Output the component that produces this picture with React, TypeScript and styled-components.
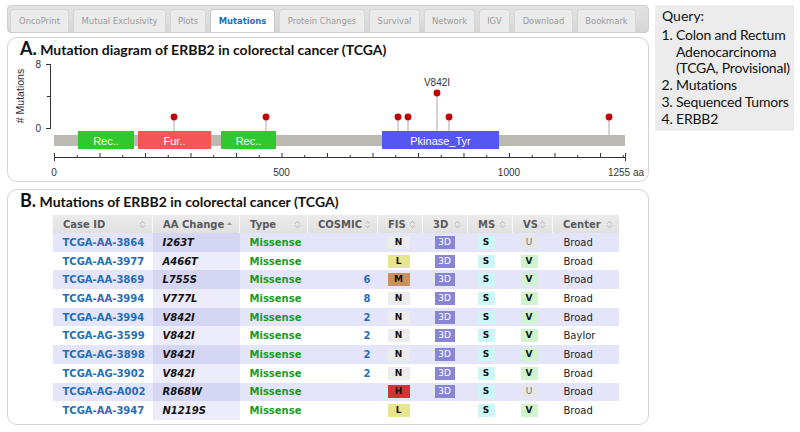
import React from "react";
import styled, { createGlobalStyle } from "styled-components";

const Global = createGlobalStyle`
  html, body { margin: 0; padding: 0; background: #fff; }
  body { width: 800px; height: 432px; overflow: hidden; }
`;

const Page = styled.div`
  display: flex;
  align-items: flex-start;
  gap: 6px;
  padding: 5px 0 0 7px;
`;

const Main = styled.div`
  width: 642px;
  display: flex;
  flex-direction: column;
`;

const TabBar = styled.div`
  height: 28px;
  box-sizing: border-box;
  border: 1px solid #cfcfcf;
  border-radius: 4px;
  background: linear-gradient(#e2e2e2, #d6d6d6);
  display: flex;
  align-items: flex-end;
  gap: 4px;
  padding-left: 2px;
`;

const Tab = styled.div<{ $w: number; $active?: boolean }>`
  width: ${(p) => p.$w}px;
  height: 23px;
  box-sizing: border-box;
  border: 1px solid ${(p) => (p.$active ? "#c8c8c8" : "#d6d6d6")};
  border-bottom: none;
  border-radius: 4px 4px 0 0;
  background: ${(p) => (p.$active ? "#fff" : "#ebebeb")};
  color: ${(p) => (p.$active ? "#1f6fb8" : "#9a9a9a")};
  font: ${(p) => (p.$active ? "bold" : "normal")} 8.4px "DejaVu Sans", Verdana, sans-serif;
  display: flex;
  align-items: center;
  justify-content: center;
  white-space: nowrap;
`;

const Panel = styled.div<{ $h: number; $mt: number }>`
  margin-top: ${(p) => p.$mt}px;
  height: ${(p) => p.$h}px;
  box-sizing: border-box;
  border: 1px solid #d4d4d4;
  border-radius: 10px;
  display: flex;
  flex-direction: column;
`;

const Title = styled.div`
  font: bold 14px Lato, "Open Sans", sans-serif;
  color: #111;
  height: 20px;
  line-height: 20px;
  padding-left: 12px;
  white-space: nowrap;
`;

const Big = styled.span`
  font-size: 18px;
`;

const Query = styled.div`
  width: 139px;
  height: 126px;
  box-sizing: border-box;
  background: #ececec;
  padding: 3px 0 0 7px;
  font: 14px Lato, "Open Sans", sans-serif;
  color: #111;
  line-height: 16.8px;
`;

const QList = styled.ol`
  margin: 2px 0 0 0;
  padding-left: 14px;
  letter-spacing: -0.2px;
`;

const Table = styled.table`
  margin: 5px 0 0 44px;
  border-collapse: collapse;
  table-layout: fixed;
  width: 566px;
  font: 10px "DejaVu Sans", Verdana, sans-serif;
`;

const Th = styled.th<{ $w: number }>`
  width: ${(p) => p.$w}px;
  height: 18px;
  padding: 0 0 0 10px;
  box-sizing: border-box;
  text-align: left;
  font-weight: bold;
  color: #5a5a5a;
  background: linear-gradient(#ebebeb, #e0e0e0);
  border-left: 1px solid #f8f8f8;
  white-space: nowrap;
`;

const ThInner = styled.div`
  display: flex;
  align-items: center;
  justify-content: space-between;
  padding-right: 6px;
`;

const Tr = styled.tr<{ $odd: boolean }>`
  height: 18.7px;
  background: ${(p) => (p.$odd ? "#e4e4fa" : "#fff")};
`;

const Td = styled.td<{ $align?: string; $pl?: number; $pr?: number }>`
  padding: 0 ${(p) => p.$pr ?? 0}px 0 ${(p) => p.$pl ?? 10}px;
  text-align: ${(p) => p.$align ?? "left"};
  white-space: nowrap;
  color: #222;
`;

const AaTd = styled(Td)<{ $odd: boolean }>`
  background: ${(p) => (p.$odd ? "#d5d5f4" : "#ececfb")};
  font-weight: bold;
  font-style: italic;
  color: #111;
`;

const CaseLink = styled.span`
  color: #1f6fb8;
  font-weight: bold;
`;

const Missense = styled.span`
  color: #1c9a1c;
  font-weight: bold;
`;

const Cosmic = styled.span`
  color: #1f6fb8;
  font-weight: bold;
`;

const Badge = styled.span<{ $w: number; $bg: string; $fg?: string; $bold?: boolean }>`
  display: inline-block;
  width: ${(p) => p.$w}px;
  height: 13px;
  line-height: 13px;
  text-align: center;
  vertical-align: middle;
  background: ${(p) => p.$bg};
  color: ${(p) => p.$fg ?? "#111"};
  font-size: 9px;
  font-weight: ${(p) => (p.$bold === false ? "normal" : "bold")};
`;

const SortIcon = ({ active }: { active?: boolean }) =>
  active ? (
    <svg width="7" height="8" viewBox="0 0 7 8">
      <path d="M1 5 L3.5 2 L6 5 Z" fill="#9a9a9a" />
    </svg>
  ) : (
    <svg width="7" height="9" viewBox="0 0 7 9">
      <path d="M1.2 3.6 L3.5 1.3 L5.8 3.6 M1.2 5.4 L3.5 7.7 L5.8 5.4" fill="none" stroke="#aaa" strokeWidth="0.9" />
    </svg>
  );

const tabs: [string, number][] = [
  ["OncoPrint", 59],
  ["Mutual Exclusivity", 93],
  ["Plots", 36],
  ["Mutations", 65],
  ["Protein Changes", 86],
  ["Survival", 51],
  ["Network", 51],
  ["IGV", 31],
  ["Download", 59],
  ["Bookmark", 59],
];

type Row = {
  id: string;
  aa: string;
  cosmic: string;
  fis: "N" | "L" | "M" | "H";
  d3: boolean;
  vs: "V" | "U";
  center: string;
};

const rows: Row[] = [
  { id: "TCGA-AA-3864", aa: "I263T", cosmic: "", fis: "N", d3: true, vs: "U", center: "Broad" },
  { id: "TCGA-AA-3977", aa: "A466T", cosmic: "", fis: "L", d3: true, vs: "V", center: "Broad" },
  { id: "TCGA-AA-3869", aa: "L755S", cosmic: "6", fis: "M", d3: true, vs: "V", center: "Broad" },
  { id: "TCGA-AA-3994", aa: "V777L", cosmic: "8", fis: "N", d3: true, vs: "V", center: "Broad" },
  { id: "TCGA-AA-3994", aa: "V842I", cosmic: "2", fis: "N", d3: true, vs: "V", center: "Broad" },
  { id: "TCGA-AG-3599", aa: "V842I", cosmic: "2", fis: "N", d3: true, vs: "V", center: "Baylor" },
  { id: "TCGA-AG-3898", aa: "V842I", cosmic: "2", fis: "N", d3: true, vs: "V", center: "Broad" },
  { id: "TCGA-AG-3902", aa: "V842I", cosmic: "2", fis: "N", d3: true, vs: "V", center: "Broad" },
  { id: "TCGA-AG-A002", aa: "R868W", cosmic: "", fis: "H", d3: true, vs: "U", center: "Broad" },
  { id: "TCGA-AA-3947", aa: "N1219S", cosmic: "", fis: "L", d3: false, vs: "V", center: "Broad" },
];

const fisBg: Record<string, string> = { N: "#ececec", L: "#e8e68c", M: "#c98f5c", H: "#d23434" };

const cols: [string, number, boolean?][] = [
  ["Case ID", 100],
  ["AA Change", 87, true],
  ["Type", 68],
  ["COSMIC", 70],
  ["FIS", 45],
  ["3D", 45],
  ["MS", 45],
  ["VS", 40],
  ["Center", 66],
];

const x0 = 54;
const scale = (625 - 54) / 1255;
const ax = (aa: number) => x0 + aa * scale;

const Diagram = () => {
  const ticks: number[] = [];
  for (let a = 0; a <= 1250; a += 50) ticks.push(a);
  const lolli: [number, number][] = [
    [174, 117],
    [266, 117],
    [398, 117],
    [408, 117],
    [437, 93],
    [449, 117],
    [609, 117],
  ];
  const domains: [number, number, string, string][] = [
    [78, 134, "#2fc82f", "Rec.."],
    [138, 211, "#f25656", "Fur.."],
    [221, 276, "#2fc82f", "Rec.."],
    [382, 499, "#5656f2", "Pkinase_Tyr"],
  ];
  return (
    <svg width="640" height="122" viewBox="8 58 640 122" style={{ display: "block" }}>
      <g fontFamily="'Liberation Sans', Arial, sans-serif" fontSize="10" fill="#333">
        <line x1="50.5" y1="64" x2="50.5" y2="129" stroke="#333" strokeWidth="1" />
        <line x1="46" y1="64.5" x2="50" y2="64.5" stroke="#333" />
        <line x1="47" y1="96.5" x2="50" y2="96.5" stroke="#333" />
        <line x1="46" y1="128.5" x2="50" y2="128.5" stroke="#333" />
        <text x="41" y="68" textAnchor="end">8</text>
        <text x="41" y="132" textAnchor="end">0</text>
        <text x="24" y="96" textAnchor="middle" fontSize="10.5" transform="rotate(-90 24 96)">
          # Mutations
        </text>
        {lolli.map(([x, y], i) => (
          <line key={"s" + i} x1={x} y1={y} x2={x} y2={136} stroke="#aaa" strokeWidth="1" />
        ))}
        <rect x="54" y="135" width="571" height="11" fill="#babab2" />
        {domains.map(([a, b, c, t], i) => (
          <g key={"d" + i}>
            <rect x={a} y={131} width={b - a} height={18} fill={c} />
            <text x={(a + b) / 2} y={144.5} textAnchor="middle" fill="#fff" fontSize="11">
              {t}
            </text>
          </g>
        ))}
        {lolli.map(([x, y], i) => (
          <circle key={"c" + i} cx={x} cy={y} r="3.4" fill="#c40000" />
        ))}
        <text x="437" y="86" textAnchor="middle" fontSize="10">V842I</text>
        <line x1="54" y1="157.5" x2="625" y2="157.5" stroke="#333" />
        {ticks.map((a) => (
          <line
            key={"t" + a}
            x1={ax(a) + 0.5}
            x2={ax(a) + 0.5}
            y1={a % 100 === 0 ? 153 : 155}
            y2={157.5}
            stroke="#333"
          />
        ))}
        <line x1="54.5" x2="54.5" y1="153" y2="161" stroke="#333" />
        <line x1="625.5" x2="625.5" y1="153" y2="161" stroke="#333" />
        <text x="54" y="176" textAnchor="middle">0</text>
        <text x={ax(500)} y="176" textAnchor="middle">500</text>
        <text x={ax(1000)} y="176" textAnchor="middle">1000</text>
        <text x="626" y="176" textAnchor="middle">1255 aa</text>
      </g>
    </svg>
  );
};

export default function App() {
  return (
    <>
      <Global />
      <Page>
        <Main>
          <TabBar>
            {tabs.map(([t, w]) => (
              <Tab key={t} $w={w} $active={t === "Mutations"}>
                {t}
              </Tab>
            ))}
          </TabBar>
          <Panel $mt={4} $h={145}>
            <Title>
              <Big>A.</Big> Mutation diagram of ERBB2 in colorectal cancer (TCGA)
            </Title>
            <Diagram />
          </Panel>
          <Panel $mt={7} $h={236}>
            <Title>
              <Big>B.</Big> Mutations of ERBB2 in colorectal cancer (TCGA)
            </Title>
            <Table>
              <thead>
                <tr>
                  {cols.map(([c, w, act]) => (
                    <Th key={c} $w={w}>
                      <ThInner>
                        <span>{c}</span>
                        <SortIcon active={act} />
                      </ThInner>
                    </Th>
                  ))}
                </tr>
              </thead>
              <tbody>
                {rows.map((r, i) => {
                  const odd = i % 2 === 0;
                  return (
                    <Tr key={i} $odd={odd}>
                      <Td>
                        <CaseLink>{r.id}</CaseLink>
                      </Td>
                      <AaTd $odd={odd}>{r.aa}</AaTd>
                      <Td>
                        <Missense>Missense</Missense>
                      </Td>
                      <Td $align="right" $pr={7}>
                        <Cosmic>{r.cosmic}</Cosmic>
                      </Td>
                      <Td $pl={10}>
                        <Badge $w={22} $bg={fisBg[r.fis]}>
                          {r.fis}
                        </Badge>
                      </Td>
                      <Td $pl={12}>
                        {r.d3 && (
                          <Badge $w={20} $bg="#8886d4" $fg="#fff" $bold={false}>
                            3D
                          </Badge>
                        )}
                      </Td>
                      <Td $pl={10}>
                        <Badge $w={17} $bg="#cdf6f6">
                          S
                        </Badge>
                      </Td>
                      <Td $pl={8}>
                        {r.vs === "V" ? (
                          <Badge $w={17} $bg="#cef5ce">
                            V
                          </Badge>
                        ) : (
                          <Badge $w={17} $bg="#e6e6e6" $fg="#777" $bold={false}>
                            U
                          </Badge>
                        )}
                      </Td>
                      <Td $pl={11}>{r.center}</Td>
                    </Tr>
                  );
                })}
              </tbody>
            </Table>
          </Panel>
        </Main>
        <Query>
          Query:
          <QList>
            <li>Colon and Rectum Adenocarcinoma (TCGA, Provisional)</li>
            <li>Mutations</li>
            <li>Sequenced Tumors</li>
            <li>ERBB2</li>
          </QList>
        </Query>
      </Page>
    </>
  );
}
